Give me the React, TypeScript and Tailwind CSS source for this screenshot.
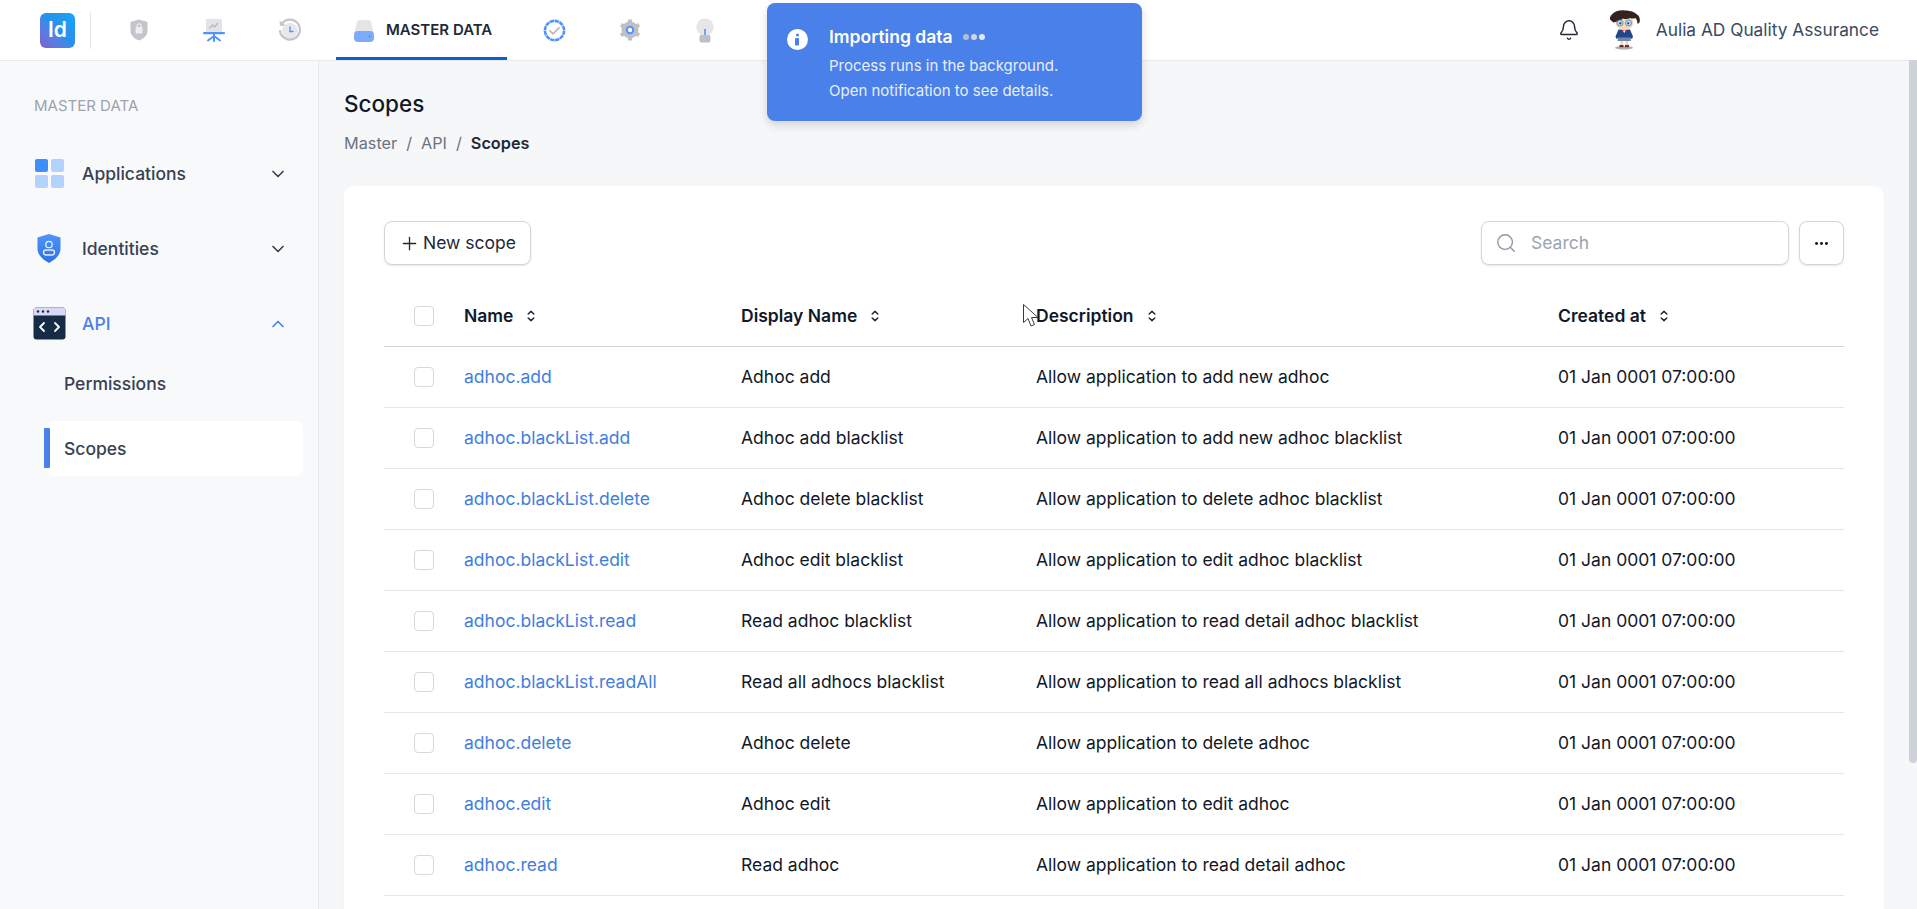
import { Bell, ChevronDown, ChevronUp, Ellipsis, Plus, Search } from "lucide-react";

const rows = [
  { name: "adhoc.add", display: "Adhoc add", desc: "Allow application to add new adhoc" },
  { name: "adhoc.blackList.add", display: "Adhoc add blacklist", desc: "Allow application to add new adhoc blacklist" },
  { name: "adhoc.blackList.delete", display: "Adhoc delete blacklist", desc: "Allow application to delete adhoc blacklist" },
  { name: "adhoc.blackList.edit", display: "Adhoc edit blacklist", desc: "Allow application to edit adhoc blacklist" },
  { name: "adhoc.blackList.read", display: "Read adhoc blacklist", desc: "Allow application to read detail adhoc blacklist" },
  { name: "adhoc.blackList.readAll", display: "Read all adhocs blacklist", desc: "Allow application to read all adhocs blacklist" },
  { name: "adhoc.delete", display: "Adhoc delete", desc: "Allow application to delete adhoc" },
  { name: "adhoc.edit", display: "Adhoc edit", desc: "Allow application to edit adhoc" },
  { name: "adhoc.read", display: "Read adhoc", desc: "Allow application to read detail adhoc" },
];

const gridCols = "grid grid-cols-[80px_277px_295px_522px_1fr] items-center";

function SortIcon() {
  return (
    <svg width="8" height="12" viewBox="0 0 8 12" fill="none" stroke="#1f2937" strokeWidth="1.5" strokeLinecap="round" strokeLinejoin="round" className="ml-[14px]">
      <path d="M1.2 4 4 1.4 6.8 4" />
      <path d="M1.2 8 4 10.6 6.8 8" />
    </svg>
  );
}

function ShieldNav() {
  return (
    <svg width="18" height="22" viewBox="0 0 18 22">
      <path d="M9 0.5 17.5 3v9c0 4.5-4 7.8-8.5 9.5C4.5 19.800.5 16.500.5 12V3z" fill="#c4c5cb" />
      <rect x="5.500" y="8" width="7" height="6.500" rx="1.200" fill="#eceded" />
      <path d="M7 8V6.800a2 2 0 0 1 4 0V8" fill="none" stroke="#eceded" strokeWidth="1.200" />
    </svg>
  );
}

function BoardNav() {
  return (
    <svg width="22" height="23" viewBox="0 0 22 23">
      <rect x="3" y="0" width="16" height="13" fill="#e4e4e6" />
      <path d="M6.500 9.500 9.500 6l2 2 3.500-4" fill="none" stroke="#b9bac0" strokeWidth="1.500" />
      <rect x="0" y="13" width="22" height="2.200" rx="1" fill="#4f94fb" />
      <path d="M11 15v7M11 17 5 21.500M11 17l6 4.500" fill="none" stroke="#4f94fb" strokeWidth="2" strokeLinecap="round" />
    </svg>
  );
}

function HistoryNav() {
  return (
    <svg width="24" height="24" viewBox="0 0 24 24">
      <circle cx="13" cy="13" r="8" fill="#e8e8ea" />
      <path d="M5 5.500A10 10 0 1 1 3 13" fill="none" stroke="#c4c5cb" strokeWidth="2.200" strokeLinecap="round" />
      <path d="M2.500 2.500 3 8l5.500-.5" fill="#c4c5cb" />
      <path d="M13 9v4.500h3" fill="none" stroke="#4f94fb" strokeWidth="1.400" strokeLinecap="round" />
    </svg>
  );
}

function DriveNav() {
  return (
    <svg width="22" height="23" viewBox="0 0 22 23">
      <path d="M3.500 5A4 4 0 0 1 7.500 1h7a4 4 0 0 1 4 4l2 8H1.500z" fill="#e5e5e7" />
      <rect x="1" y="12" width="20" height="11" rx="4" fill="#7cabfb" />
      <circle cx="16.500" cy="17.500" r=".8" fill="#3b7be0" />
    </svg>
  );
}

function VerifiedNav() {
  return (
    <svg width="23" height="23" viewBox="0 0 23 23">
      <circle cx="11.500" cy="11.500" r="9.600" fill="#fff" stroke="#4f94fb" strokeWidth="2.600" strokeDasharray="4.400 .6" />
      <path d="m7 11.800 3 3 6-6" fill="none" stroke="#b9bac0" strokeWidth="1.800" strokeLinecap="round" strokeLinejoin="round" />
    </svg>
  );
}

function GearNav() {
  return (
    <svg width="22" height="22" viewBox="0 0 22 22">
      <circle cx="11" cy="11" r="8.500" fill="#bfc0c7" />
      <g stroke="#bfc0c7" strokeWidth="4" strokeLinecap="butt">
        <path d="M11 0.500V5M11 17v4.500M1.900 5.800l3.900 2.200M16.200 14l3.900 2.200M1.900 16.200 5.800 14M16.200 8l3.900-2.200" />
      </g>
      <circle cx="11" cy="11" r="3.200" fill="#fff" stroke="#4f94fb" strokeWidth="2" />
    </svg>
  );
}

function BulbNav() {
  return (
    <svg width="18" height="25" viewBox="0 0 18 25">
      <path d="M9 .5a8.500 8.500 0 0 1 5 15.400V18H4v-2.100A8.500 8.500 0 0 1 9 .5z" fill="#e6e6e8" />
      <rect x="3.500" y="17" width="11" height="7.500" rx="2" fill="#bfc0c7" />
      <path d="M9 11v6" stroke="#4f94fb" strokeWidth="1.600" />
    </svg>
  );
}

function Avatar() {
  return (
    <svg width="34" height="40" viewBox="0 0 34 40">
      <ellipse cx="16" cy="37.800" rx="9" ry="1.800" fill="#b0b0b0" />
      <rect x="12.500" y="30" width="2.600" height="6" fill="#efd3b6" />
      <rect x="17.500" y="30" width="2.600" height="6" fill="#efd3b6" />
      <rect x="11.500" y="35" width="4" height="2.200" fill="#6a2f28" />
      <rect x="17" y="35" width="4" height="2.200" fill="#6a2f28" />
      <path d="M10 26h12.500l.5 5h-13.500z" fill="#6d87ad" />
      <path d="M10.500 19.500h11.500l3 7-1 2.500-2-1.500H10.500l-2 1.500-1-2.500z" fill="#20478c" />
      <path d="M14 19.500h4.500l-2.200 3.500z" fill="#f0f0f0" />
      <path d="M13.800 19.800l2.400 1 2.400-1v2l-2.400-1-2.400 1z" fill="#c5262c" />
      <ellipse cx="16.500" cy="12.500" rx="9" ry="7.500" fill="#f5d9bd" />
      <path d="M2.500 10C1 8 3 5 5 3.500 8 .5 13 0 17 .5c6 0 11 2 14 6 1 2 1 4 .5 6l-2 1.500c0-2-.5-4-2-6-2 1-4 .5-5.500 0-2 1-5 1.500-7 .5-1.500 1-3 2.500-5 5.500l-1-2.500-3.500 1z" fill="#33221d" />
      <circle cx="12" cy="13" r="3.100" fill="#b8d3ee" stroke="#5a7b9c" strokeWidth=".7" />
      <circle cx="20.500" cy="13" r="3.100" fill="#b8d3ee" stroke="#5a7b9c" strokeWidth=".7" />
      <circle cx="12.300" cy="13.300" r="1.100" fill="#26435f" />
      <circle cx="20.200" cy="13.300" r="1.100" fill="#26435f" />
    </svg>
  );
}

function AppsIcon() {
  return (
    <div className="grid grid-cols-2 gap-[3px] w-[29px] h-[29px]">
      <div className="rounded-[2px] bg-[#3f8efc]" />
      <div className="rounded-[2px] bg-[#b3d2fe]" />
      <div className="rounded-[2px] bg-[#b3d2fe]" />
      <div className="rounded-[2px] bg-[#b3d2fe]" />
    </div>
  );
}

function IdentityIcon() {
  return (
    <svg width="24" height="29" viewBox="0 0 24 29">
      <defs>
        <linearGradient id="idg" x1="0" y1="0" x2="0" y2="1">
          <stop offset="0" stopColor="#4f94fb" />
          <stop offset="1" stopColor="#2d74e3" />
        </linearGradient>
      </defs>
      <path d="M12 0 23.500 3.500v11c0 6.500-5 11-11.500 14.500C5.500 25.500.5 21 .5 14.500v-11z" fill="url(#idg)" />
      <circle cx="12" cy="10.500" r="3.200" fill="none" stroke="#e6f0ff" strokeWidth="1.300" />
      <rect x="6.500" y="16" width="11" height="5" rx="2.500" fill="none" stroke="#e6f0ff" strokeWidth="1.300" />
    </svg>
  );
}

function ApiIcon() {
  return (
    <svg width="33" height="33" viewBox="0 0 33 33">
      <rect x="0.500" y="0.500" width="32" height="32" rx="3" fill="#162b45" />
      <path d="M.5 8.500v-5a3 3 0 0 1 3-3h26a3 3 0 0 1 3 3v5z" fill="#d8d8f8" />
      <circle cx="5" cy="4.500" r="1.200" fill="#162b45" />
      <circle cx="10" cy="4.500" r="1.200" fill="#162b45" />
      <circle cx="15" cy="4.500" r="1.200" fill="#162b45" />
      <path d="m11 16-4 4 4 4M22 16l4 4-4 4" fill="none" stroke="#fff" strokeWidth="1.800" strokeLinecap="round" strokeLinejoin="round" />
    </svg>
  );
}

function TopNav() {
  return (
    <header className="h-[61px] shrink-0 bg-white border-b border-[#e9eaed] flex items-center justify-between pr-[38px]">
      <div className="flex items-center h-full">
        <div className="ml-[40px] w-[35px] h-[35px] rounded-[6px] bg-gradient-to-tr from-[#7a5fd0] via-[#2a8fec] to-[#14a5fb] flex items-center justify-center text-white text-[21px] font-semibold">
          Id
        </div>
        <div className="ml-[15px] w-px h-[37px] bg-[#e4e5e8]" />
        <div className="ml-[10px] w-[75px] flex justify-center"><ShieldNav /></div>
        <div className="w-[75px] flex justify-center"><BoardNav /></div>
        <div className="w-[75px] flex justify-center"><HistoryNav /></div>
        <div className="ml-[10px] w-[171px] h-full flex items-center pl-[17px] gap-[11px] border-b-[3px] border-[#0b5ed7] text-[15px] font-semibold text-[#1f2937] pt-[3px]">
          <DriveNav />
          MASTER DATA
        </div>
        <div className="ml-[10px] w-[75px] flex justify-center"><VerifiedNav /></div>
        <div className="w-[75px] flex justify-center"><GearNav /></div>
        <div className="w-[75px] flex justify-center"><BulbNav /></div>
      </div>
      <div className="flex items-center">
        <Bell size={22} strokeWidth={1.6} className="text-[#1f2937] mr-[28px]" />
        <Avatar />
        <span className="ml-[14px] text-[17.3px] text-[#3a4960]">Aulia AD Quality Assurance</span>
      </div>
    </header>
  );
}

function Sidebar() {
  return (
    <aside className="w-[319px] shrink-0 bg-[#f8f9fb] border-r border-[#e6e7ea] pt-[35px]">
      <div className="pl-[34px] text-[15px] leading-[20px] text-[#9ca3af]">MASTER DATA</div>
      <div className="mt-[20px] h-[75px] pl-[35px] pr-[30px] flex items-center text-[#374151]">
        <div className="w-[47px]"><AppsIcon /></div>
        <span className="mt-[2px] text-[17.5px] font-medium flex-1">Applications</span>
        <ChevronDown size={20} />
      </div>
      <div className="h-[75px] pl-[37px] pr-[30px] flex items-center text-[#374151]">
        <div className="w-[45px]"><IdentityIcon /></div>
        <span className="mt-[2px] text-[17.5px] font-medium flex-1">Identities</span>
        <ChevronDown size={20} />
      </div>
      <div className="h-[75px] pl-[33px] pr-[30px] flex items-center text-[#4a80ea]">
        <div className="w-[49px]"><ApiIcon /></div>
        <span className="mt-[2px] text-[17.5px] font-medium flex-1">API</span>
        <ChevronUp size={20} />
      </div>
      <div className="h-[44px] pt-[2px] pl-[64px] flex items-center text-[17.5px] font-medium text-[#374151]">Permissions</div>
      <div className="relative ml-[47px] mt-[16px] w-[256px] h-[55px] pt-[2px] bg-white rounded-[8px] pl-[17px] flex items-center text-[17.5px] font-medium text-[#374151]">
        <div className="absolute left-[-3px] top-[7px] w-[6px] h-[40px] rounded-[1px] bg-[#4a80ea]" />
        Scopes
      </div>
    </aside>
  );
}

function ScopesTable() {
  return (
    <div>
      <div className={`${gridCols} h-[61px] border-b border-[#d3d5dc] text-[17.5px] font-semibold text-[#111827]`}>
        <div className="pl-[30px]"><div className="w-[20px] h-[20px] rounded-[4px] border border-[#d5d7dd] bg-white" /></div>
        <div className="flex items-center">Name<SortIcon /></div>
        <div className="flex items-center">Display Name<SortIcon /></div>
        <div className="flex items-center">Description<SortIcon /></div>
        <div className="flex items-center">Created at<SortIcon /></div>
      </div>
      {rows.map((row) => (
        <div key={row.name} className={`${gridCols} h-[61px] border-b border-[#e5e6e9] text-[17.5px] text-[#111827]`}>
          <div className="pl-[30px]"><div className="w-[20px] h-[20px] rounded-[4px] border border-[#d5d7dd] bg-white" /></div>
          <div className="text-[#3f7ee0]">{row.name}</div>
          <div>{row.display}</div>
          <div>{row.desc}</div>
          <div>01 Jan 0001 07:00:00</div>
        </div>
      ))}
    </div>
  );
}

export default function App() {
  return (
    <div className="relative h-[909px] overflow-hidden flex flex-col bg-[#f6f7f9] font-['Inter',sans-serif]">
      <TopNav />
      <div className="flex flex-1 min-h-0">
        <Sidebar />
        <main className="flex-1 min-w-0 pl-[25px] pr-[25px] pt-[30px]">
          <h1 className="text-[22.5px] leading-[26px] font-medium text-[#111827]">Scopes</h1>
          <div className="mt-[14px] h-[24px] flex items-center text-[16.25px] text-[#6b7280] gap-[9px]">
            <span>Master</span><span>/</span><span>API</span><span>/</span>
            <span className="font-semibold text-[#1f2937]">Scopes</span>
          </div>
          <div className="mt-[31px] bg-white rounded-[10px] px-[40px] pt-[35px] pb-[40px] shadow-[0_1px_3px_rgba(0,0,0,0.03)]">
            <div className="flex items-center justify-between mb-[21px]">
              <button className="w-[147px] h-[44px] rounded-[8px] border border-[#d3d5dc] bg-white shadow-[0_1px_2px_rgba(0,0,0,0.1)] flex items-center justify-center gap-[3px] text-[17.5px] text-[#1f2937]">
                <Plus size={21} strokeWidth={1.5} />
                New scope
              </button>
              <div className="flex items-center gap-[10px]">
                <div className="w-[308px] h-[44px] rounded-[8px] border border-[#d3d5dc] bg-white shadow-[0_1px_2px_rgba(0,0,0,0.1)] flex items-center pl-[13px] gap-[14px] text-[17.5px] text-[#9ca3af]">
                  <Search size={22} strokeWidth={1.5} className="text-[#8f96a3]" />
                  Search
                </div>
                <div className="w-[45px] h-[44px] rounded-[8px] border border-[#d3d5dc] bg-white shadow-[0_1px_2px_rgba(0,0,0,0.1)] flex items-center justify-center text-[#111827]">
                  <Ellipsis size={17} strokeWidth={2.2} />
                </div>
              </div>
            </div>
            <ScopesTable />
          </div>
        </main>
        <div className="w-[8px] shrink-0 -mt-px">
          <div className="h-[703px] rounded-b-[4px] bg-[#cdd1da]" />
        </div>
      </div>

      {/* toast */}
      <div className="absolute left-[767px] top-[3px] w-[375px] h-[118px] rounded-[8px] bg-[#4a80ea] shadow-[0_4px_10px_rgba(0,0,0,0.15)] flex pl-[20px] pt-[26px] text-white">
        <svg width="21" height="21" viewBox="0 0 21 21">
          <circle cx="10.500" cy="10.500" r="10.500" fill="#fff" />
          <circle cx="10.500" cy="6" r="1.500" fill="#4a80ea" />
          <rect x="8" y="9" width="4" height="7.500" rx=".8" fill="#4a80ea" />
        </svg>
        <div className="ml-[21px] -mt-[3px]">
          <div className="flex items-center h-[22px] text-[17.5px] font-semibold">
            Importing data
            <span className="ml-[10px] flex gap-[2px]">
              <span className="w-[6px] h-[6px] rounded-full bg-[#b7bdcb]" />
              <span className="w-[6px] h-[6px] rounded-full bg-[#cfd6e6]" />
              <span className="w-[6px] h-[6px] rounded-full bg-[#e3e8f4]" />
            </span>
          </div>
          <div className="mt-[5px] text-[15px] leading-[25px] text-[#e8effc]">
            Process runs in the background.
            <br />
            Open notification to see details.
          </div>
        </div>
      </div>

      {/* mouse pointer captured in the screenshot */}
      <svg width="17" height="25" viewBox="0 0 17 25" className="absolute left-[1023px] top-[304px]">
        <path d="M.5.5v18l4.500-4 3 7.500 3.500-1.500-3-7h6.500z" fill="#fff" stroke="#3a3a3a" strokeWidth="1" />
      </svg>
    </div>
  );
}
